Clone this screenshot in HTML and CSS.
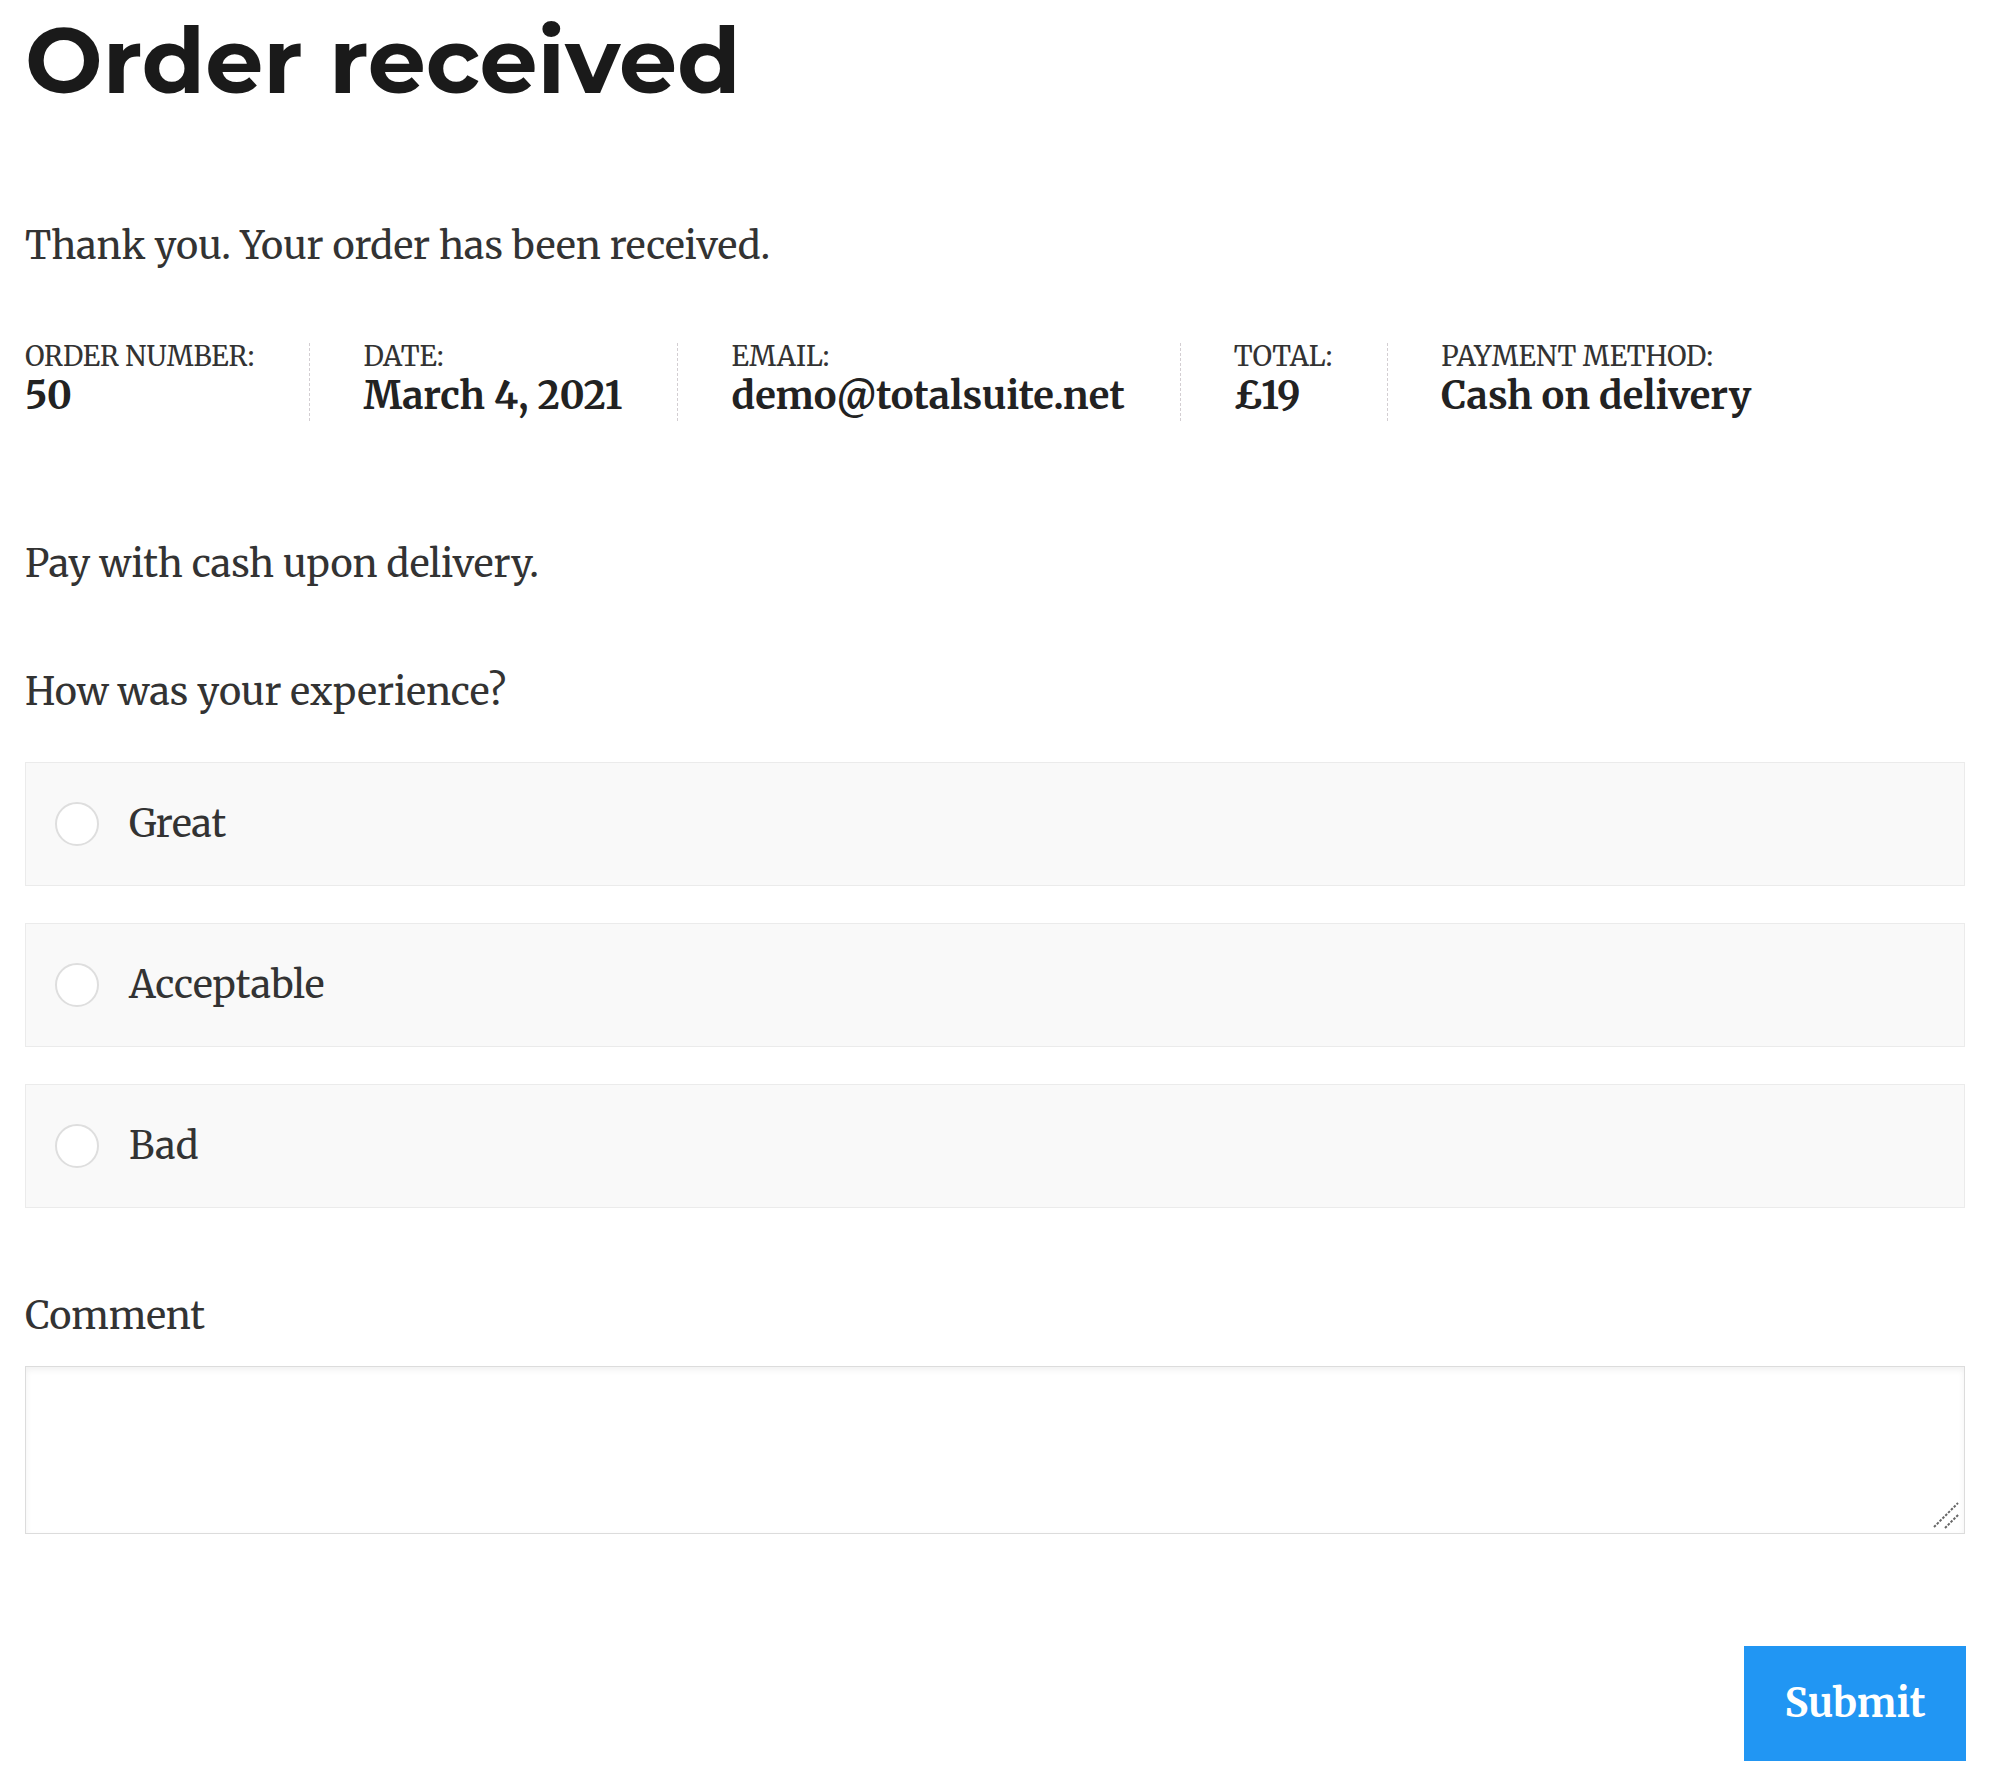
FILE: index.html
```html
<!DOCTYPE html>
<html lang="en">
<head>
<meta charset="utf-8">
<title>Order received</title>
<link rel="stylesheet" href="styles.css">
</head>
<body>
<main class="page">
  <h1 class="title">Order received</h1>
  <p class="notice">Thank you. Your order has been received.</p>
  <ul class="overview">
    <li class="overview-item"><span class="overview-label">Order number:</span><strong class="overview-value">50</strong></li>
    <li class="overview-item"><span class="overview-label">Date:</span><strong class="overview-value">March 4, 2021</strong></li>
    <li class="overview-item"><span class="overview-label">Email:</span><strong class="overview-value">demo@totalsuite.net</strong></li>
    <li class="overview-item"><span class="overview-label">Total:</span><strong class="overview-value">£19</strong></li>
    <li class="overview-item overview-item--last"><span class="overview-label">Payment method:</span><strong class="overview-value">Cash on delivery</strong></li>
  </ul>
  <p class="pay-note">Pay with cash upon delivery.</p>
  <form class="survey">
    <p class="question">How was your experience?</p>
    <div class="options">
      <label class="option"><span class="radio"></span><span class="option-text">Great</span></label>
      <label class="option"><span class="radio"></span><span class="option-text">Acceptable</span></label>
      <label class="option"><span class="radio"></span><span class="option-text">Bad</span></label>
    </div>
    <label class="comment-label" for="comment">Comment</label>
    <div class="comment-wrap">
      <textarea class="comment" id="comment"></textarea>
      <svg class="grip" width="30" height="30" viewBox="0 0 30 30"><path d="M2 26 L26 2 M13 27 L27 13" stroke="#666" stroke-width="2" stroke-dasharray="2.5 1.5" fill="none"/></svg>
    </div>
    <div class="actions"><button class="submit" type="button">Submit</button></div>
  </form>
</main>
</body>
</html>
```

FILE: styles.css
```css
* { box-sizing: border-box; }
html, body { margin: 0; background: #fff; }
body {
  font-family: Merriweather, "DejaVu Serif", serif;
  font-size: 37.8px;
  color: #333;
}
.page { width: 1940px; margin-left: 25px; }
.title {
  font-family: Montserrat, Inter, "Noto Sans", sans-serif;
  font-weight: 700;
  font-size: 92px;
  line-height: 110px;
  padding-top: 5px;
  margin: 0;
  color: #1a1a1a;
}
.notice { margin: 101px 0 0; line-height: 60px; }
.overview {
  list-style: none;
  margin: 67px 0 0;
  padding: 0;
  display: flex;
}
.overview-item {
  display: flex;
  flex-direction: column;
  font-size: 27.1px;
  line-height: 26.8px;
  text-transform: uppercase;
  padding-right: 55px;
  margin-right: 53px;
  border-right: 1px dashed #d3ced2;
}
.overview-item--last { border-right: 0; }
.overview-value {
  font-size: 38.1px;
  line-height: 51px;
  font-weight: 700;
  text-transform: none;
  color: #222;
}
.pay-note { margin: 113px 0 0; line-height: 60px; }
.survey { margin: 0; }
.question { margin: 68px 0 0; line-height: 60px; }
.options { margin-top: 40px; display: flex; flex-direction: column; gap: 37px; }
.option {
  height: 124px;
  border: 1px solid #ebebeb;
  background: #f9f9f9;
  display: flex;
  align-items: center;
  gap: 30px;
  padding-left: 29px;
}
.radio {
  width: 44px; height: 44px;
  border-radius: 50%;
  border: 2px solid #dedede;
  background: #fff;
  flex: none;
}
.option-text { line-height: 60px; }
.comment-label { display: block; margin-top: 78px; line-height: 60px; }
.comment-wrap { position: relative; margin-top: 20px; }
.comment {
  display: block;
  width: 100%;
  height: 168px;
  border: 1px solid #dcdcdc;
  box-shadow: inset 0 3px 6px rgba(0,0,0,0.06);
  resize: none;
  background: #fff;
  font: inherit;
}
.grip { position: absolute; right: 3px; bottom: 3px; }
.actions { display: flex; justify-content: flex-end; margin-top: 112px; }
.submit {
  width: 222px;
  height: 115px;
  margin-right: -1px;
  border: none;
  background: #2196f3;
  color: #fff;
  font: inherit;
  font-size: 39.5px;
  font-weight: 700;
}
```
